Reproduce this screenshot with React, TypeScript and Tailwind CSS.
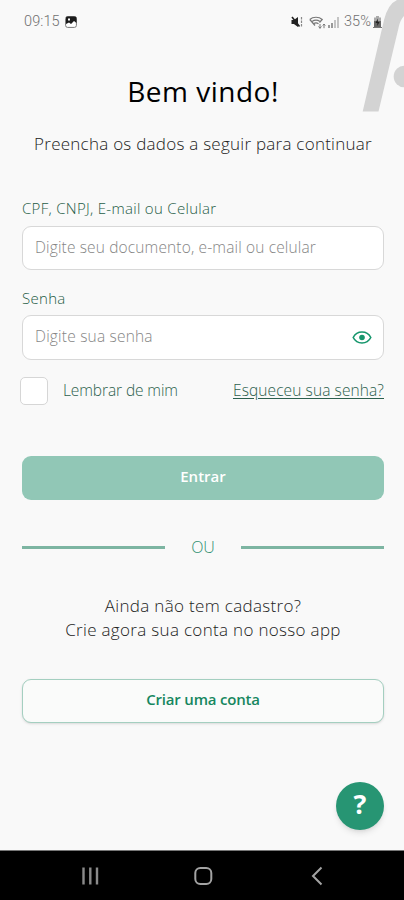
import { useState } from "react"

const StatusBar = () => {
  return (
    <div className="h-11 pl-[24px] pr-[22px] flex justify-between items-center font-['Roboto',sans-serif] text-[14.5px] text-[#707070]">
      <div className="flex items-center gap-[5px]">
        <span className="tracking-[0.1px]">09:15</span>
        <svg width="12" height="12" viewBox="0 0 12 12">
          <rect x="0.6" y="0.6" width="10.8" height="10.8" rx="2" fill="#fff" stroke="#777" strokeWidth="1" />
          <path d="M2 0.500h8a1.500 1.500 0 0 1 1.500 1.500v5L9 5 6 8 4 6.500 1 8V2A1.500 1.500 0 0 1 2 0.500z" fill="#1c1c1c" />
          <path d="M3 2.500h2v2H3z" fill="#fff" />
        </svg>
      </div>
      <div className="flex items-center">
        <svg className="mr-[6px]" width="12" height="12" viewBox="0 0 12 12">
          <path d="M0.5 4h2.4L7 1v10L2.9 8H0.5z" fill="#222" />
          <path d="M1 1l7.5 9.5" stroke="#222" strokeWidth="1.6" />
          <path d="M10.5 1v10" stroke="#888" strokeWidth="1.2" strokeDasharray="2.500 1" />
        </svg>
        <svg className="mr-[2px]" width="17" height="13" viewBox="0 0 17 13" fill="none" stroke="#777" strokeWidth="1.2">
          <path d="M0.8 3.500C4 0.500 10 0.500 13.200 3.500L10.500 6.500M3 5.500c2.300-1.500 5.700-1.500 8 0M4.500 7.700c1.500-1 3.500-1 5 0M0.8 3.500L6 9.500" />
          <path d="M11 8v4.500M9.500 10.500L11 12.200l1.500-1.700M15 12.200V8M13.700 9.500L15 8l1.300 1.500" strokeWidth="1" />
        </svg>
        <svg className="mr-[5px]" width="11" height="11" viewBox="0 0 11 11">
          <path d="M0 8h2v3H0zM3 6h2v5H3z" fill="#999" />
          <path d="M6 3h2v8H6zM9 0h2v11H9z" fill="#c4c4c4" />
        </svg>
        <span className="tracking-[0.1px]">35%</span>
        <svg className="ml-[2px]" width="9" height="12" viewBox="0 0 9 12">
          <path d="M3 0h3v1.500h2V6H1V1.500h2z" fill="#aaa" />
          <path d="M1 5h7v7H1z" fill="#666" />
          <path d="M4.800 2.500L2.500 7h1.800v3L6.500 6H4.800z" fill="#222" />
          <path d="M0 11h9v1H0z" fill="#777" />
        </svg>
      </div>
    </div>
  )
}

const NavBar = () => {
  return (
    <div className="h-[50px] bg-black border-t border-[#777]">
      <svg width="404" height="49" viewBox="0 0 404 49" fill="none" stroke="#a3a3a3" strokeWidth="2">
        <path d="M83.500 16.500v17M90.300 16.500v17M97 16.500v17" strokeWidth="2.400" stroke="#8a8a8a" />
        <rect x="195.300" y="17" width="16" height="16" rx="5" />
        <path d="M321.500 16.500l-8.500 8.500 8.500 8.500" />
      </svg>
    </div>
  )
}

const App = () => {
  const [remember, setRemember] = useState(false)
  const [showPassword, setShowPassword] = useState(false)

  return (
    <div className="relative w-[404px] h-[900px] overflow-hidden flex flex-col bg-[#f9f9f9] font-['Open_Sans',sans-serif] font-light">
      <svg className="absolute top-0 right-0" width="44" height="114" viewBox="0 0 44 114" fill="#d3d3d3">
        <path d="M2.700 111.500L24 20Q28 4 37 0H44V16Q40 20 38.500 28L18.500 111.500z" />
        <circle cx="44.500" cy="76.500" r="10.800" />
      </svg>
      <StatusBar />

      <div className="grow pl-[22px] pr-[20px] flex flex-col">
        <h1 className="mt-[27px] h-10 leading-10 text-center text-[28px] tracking-[0.5px] font-medium text-black whitespace-nowrap">
          Bem vindo!
        </h1>
        <p className="mt-[21px] h-6 leading-6 text-center text-[17px] tracking-[0.25px] text-[#222] whitespace-nowrap">
          Preencha os dados a seguir para continuar
        </p>

        <label htmlFor="login" className="mt-[42px] h-5 leading-5 text-[15px] tracking-[0.3px] text-[#1f5c46] whitespace-nowrap">
          CPF, CNPJ, E-mail ou Celular
        </label>
        <input
          id="login"
          className="mt-[8px] h-[44px] px-[12px] pb-[3px] rounded-[9px] border border-[#d8d8d8] bg-white text-[15.500px] tracking-[0.140px] placeholder:text-[#858585] outline-none"
          placeholder="Digite seu documento, e-mail ou celular"
        />

        <label htmlFor="senha" className="mt-[18px] h-5 leading-5 text-[15px] tracking-[0.3px] text-[#1f5c46]">
          Senha
        </label>
        <div className="mt-[7px] h-[45px] px-[12px] rounded-[9px] border border-[#d8d8d8] bg-white flex items-center">
          <input
            id="senha"
            type={showPassword ? "text" : "password"}
            className="grow h-full pb-[3px] text-[15.500px] tracking-[0.200px] placeholder:text-[#858585] outline-none"
            placeholder="Digite sua senha"
          />
          <button aria-label="Mostrar senha" onClick={() => setShowPassword(!showPassword)}>
            <svg className="-mr-px" width="20" height="14" viewBox="0 0 20 14">
              <path d="M1.200 6.500C3 3 6 1 10 1S17 3 18.800 6.500C17 10 14 12 10 12S3 10 1.200 6.500z" fill="none" stroke="#16966c" strokeWidth="1.600" />
              <circle cx="10" cy="6.500" r="2.800" fill="#16966c" />
            </svg>
          </button>
        </div>

        <div className="mt-[16px] h-[29px] flex justify-between items-center text-[15.500px] text-[#2c5f4d]">
          <div className="flex items-center">
            <button
              aria-label="Lembrar de mim"
              className={remember ? "-ml-[2px] size-7 rounded-[5px] border border-[#d6d6d6] bg-[#16966c]" : "-ml-[2px] size-7 rounded-[5px] border border-[#d6d6d6] bg-white"}
              onClick={() => setRemember(!remember)}
            />
            <span className="ml-[15px] tracking-[-0.100px] whitespace-nowrap">Lembrar de mim</span>
          </div>
          <a className="tracking-[0.100px] underline underline-offset-2 whitespace-nowrap" href="#">Esqueceu sua senha?</a>
        </div>

        <button className="mt-[51px] h-[44px] pb-[3px] rounded-[9px] bg-[#91c7b6] text-white text-[15px] font-semibold">
          Entrar
        </button>

        <div className="mt-[35px] h-6 flex items-center">
          <div className="w-[143px] h-[2.500px] mt-px bg-[#7db5a2]"></div>
          <div className="grow text-center text-[16px] text-[#2f8f70]">OU</div>
          <div className="w-[143px] h-[2.500px] mt-px bg-[#7db5a2]"></div>
        </div>

        <p className="mt-[35px] leading-6 text-center text-[17px] tracking-[0.320px] text-[#222] whitespace-nowrap">
          Ainda não tem cadastro?
          <br />
          Crie agora sua conta no nosso app
        </p>

        <button className="mt-[37px] h-[44px] pb-[3px] rounded-[9px] border border-[#a4cfc0] bg-[#fafbfa] shadow-sm text-[#16875f] text-[15px] font-semibold tracking-[-0.200px]">
          Criar uma conta
        </button>

        <button className="mt-[59px] self-end size-12 pb-[5px] rounded-full bg-[#279573] shadow-md text-white text-[27px] leading-none font-bold">
          ?
        </button>
      </div>

      <NavBar />
    </div>
  )
}

export default App
